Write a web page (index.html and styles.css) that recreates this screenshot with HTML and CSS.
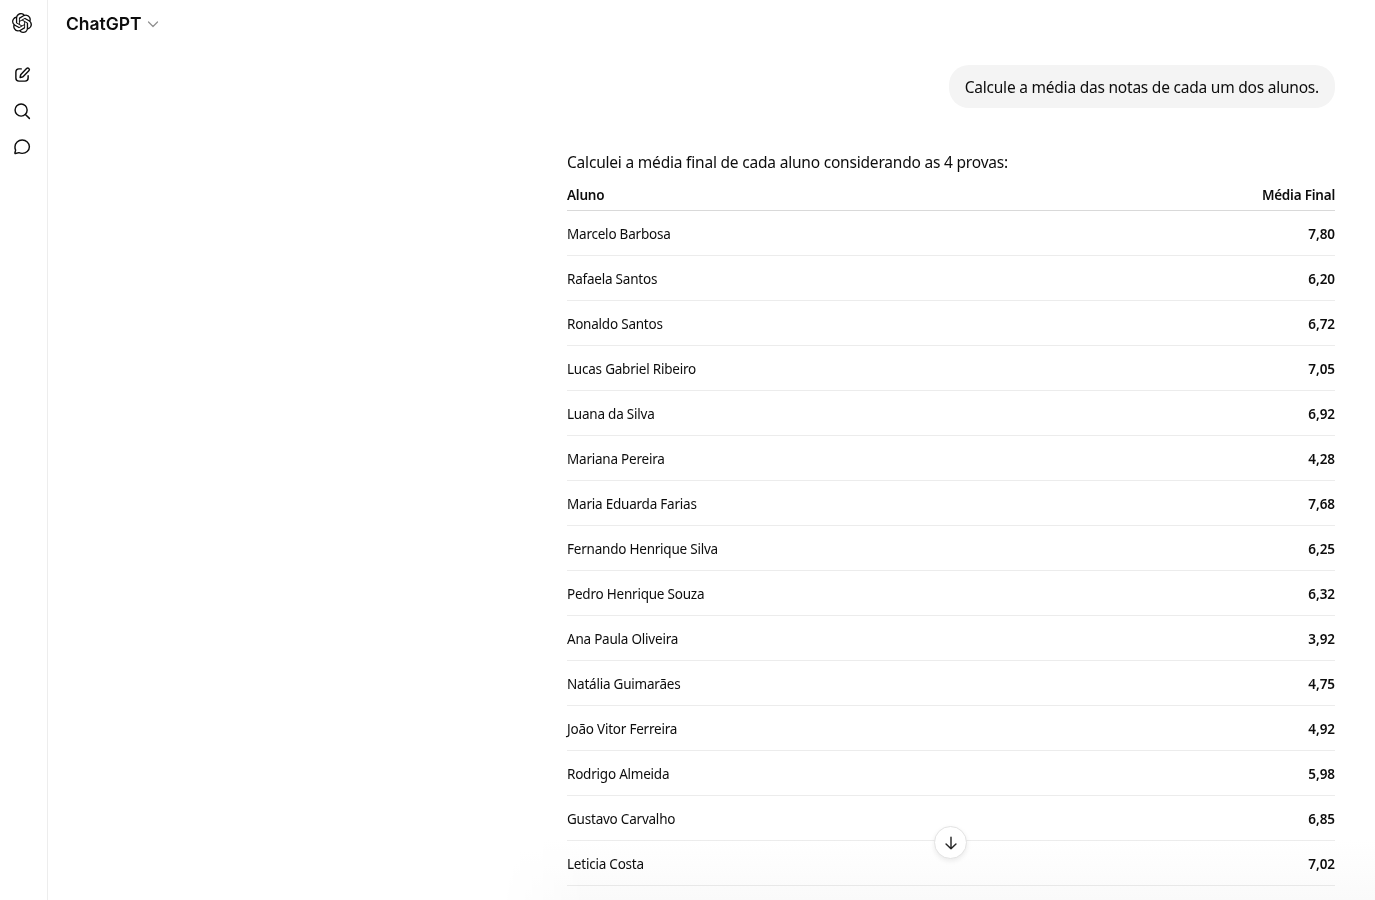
FILE: index.html
```html
<!DOCTYPE html>
<html lang="pt-BR">
<head>
<meta charset="utf-8">
<title>ChatGPT</title>
<link rel="stylesheet" href="styles.css">
</head>
<body>
<div class="app">
  <nav class="rail">
    <a class="rail-logo" aria-label="ChatGPT">
      <svg class="logo" viewBox="0 0 24 24"><path d="M22.2819 9.8211a5.9847 5.9847 0 0 0-.5157-4.9108 6.0462 6.0462 0 0 0-6.5098-2.9A6.0651 6.0651 0 0 0 4.9807 4.1818a5.9847 5.9847 0 0 0-3.9977 2.9 6.0462 6.0462 0 0 0 .7427 7.0966 5.98 5.98 0 0 0 .511 4.9107 6.051 6.051 0 0 0 6.5146 2.9001A5.9847 5.9847 0 0 0 13.2599 24a6.0557 6.0557 0 0 0 5.7718-4.2058 5.9894 5.9894 0 0 0 3.9977-2.9001 6.0557 6.0557 0 0 0-.7475-7.0729zm-9.022 12.6081a4.4755 4.4755 0 0 1-2.8764-1.0408l.1419-.0804 4.7783-2.7582a.7948.7948 0 0 0 .3927-.6813v-6.7369l2.02 1.1686a.071.071 0 0 1 .038.052v5.5826a4.504 4.504 0 0 1-4.4945 4.4944zm-9.6607-4.1254a4.4708 4.4708 0 0 1-.5346-3.0137l.142.0852 4.783 2.7582a.7712.7712 0 0 0 .7806 0l5.8428-3.3685v2.3324a.0804.0804 0 0 1-.0332.0615L9.74 19.9502a4.4992 4.4992 0 0 1-6.1408-1.6464zM2.3408 7.8956a4.485 4.485 0 0 1 2.3655-1.9728V11.6a.7664.7664 0 0 0 .3879.6765l5.8144 3.3543-2.0201 1.1685a.0757.0757 0 0 1-.071 0l-4.8303-2.7865A4.504 4.504 0 0 1 2.3408 7.872zm16.5963 3.8558L13.1038 8.364 15.1192 7.2a.0757.0757 0 0 1 .071 0l4.8303 2.7913a4.4944 4.4944 0 0 1-.6765 8.1042v-5.6772a.79.79 0 0 0-.407-.667zm2.0107-3.0231l-.142-.0852-4.7735-2.7818a.7759.7759 0 0 0-.7854 0L9.409 9.2297V6.8974a.0662.0662 0 0 1 .0284-.0615l4.8303-2.7866a4.4992 4.4992 0 0 1 6.6802 4.66zM8.3065 12.863l-2.02-1.1638a.0804.0804 0 0 1-.038-.0567V6.0742a4.4992 4.4992 0 0 1 7.3757-3.4537l-.142.0805L8.704 5.459a.7948.7948 0 0 0-.3927.6813zm1.0976-2.3654l2.602-1.4998 2.6069 1.4998v2.9994l-2.5974 1.4997-2.6067-1.4997Z"/></svg>
    </a>
    <div class="rail-tools">
      <a class="rail-btn" aria-label="Novo chat">
        <svg class="ico" viewBox="0 0 20 20"><path d="M9.2 3.200H6.600A3.400 3.400 0 0 0 3.200 6.600v6.800a3.400 3.400 0 0 0 3.400 3.400h6.800a3.400 3.400 0 0 0 3.400-3.400v-2.600"/><path d="M15.100 2.900a1.750 1.750 0 0 1 2.500 2.500l-6.200 6.200a2.400 2.400 0 0 1-1.100.6l-2.400.5.5-2.400a2.400 2.400 0 0 1 .6-1.100z"/></svg>
      </a>
      <a class="rail-btn" aria-label="Buscar">
        <svg class="ico" viewBox="0 0 20 20"><circle cx="9" cy="9" r="6.700"/><path d="M13.800 13.800l4.400 4.400"/></svg>
      </a>
      <a class="rail-btn" aria-label="Chats">
        <svg class="ico" viewBox="0 0 20 20"><path d="M10.200 2.300c4.400 0 8 3.200 8 7.400s-3.600 7.400-8 7.400c-1.300 0-2.500-.3-3.600-.8l-3.900.9c-.4.1-.7-.2-.6-.6l.8-3.200a7 7 0 0 1-.7-3.700c0-4.200 3.600-7.400 8-7.400z"/></svg>
      </a>
    </div>
  </nav>
  <div class="main">
    <header class="topbar">
      <span class="brand">ChatGPT</span>
      <svg class="caret" viewBox="0 0 12 12"><path d="M1.500 4l4.500 4.500L10.500 4"/></svg>
    </header>
    <div class="thread">
      <div class="column">
        <div class="user-row"><div class="bubble">Calcule a média das notas de cada um dos alunos.</div></div>
        <p class="intro">Calculei a média final de cada aluno considerando as 4 provas:</p>
        <table class="grades">
          <thead><tr><th>Aluno</th><th class="num">Média Final</th></tr></thead>
          <tbody>
            <tr><td>Marcelo Barbosa</td><td class="num">7,80</td></tr>
            <tr><td>Rafaela Santos</td><td class="num">6,20</td></tr>
            <tr><td>Ronaldo Santos</td><td class="num">6,72</td></tr>
            <tr><td>Lucas Gabriel Ribeiro</td><td class="num">7,05</td></tr>
            <tr><td>Luana da Silva</td><td class="num">6,92</td></tr>
            <tr><td>Mariana Pereira</td><td class="num">4,28</td></tr>
            <tr><td>Maria Eduarda Farias</td><td class="num">7,68</td></tr>
            <tr><td>Fernando Henrique Silva</td><td class="num">6,25</td></tr>
            <tr><td>Pedro Henrique Souza</td><td class="num">6,32</td></tr>
            <tr><td>Ana Paula Oliveira</td><td class="num">3,92</td></tr>
            <tr><td>Natália Guimarães</td><td class="num">4,75</td></tr>
            <tr><td>João Vitor Ferreira</td><td class="num">4,92</td></tr>
            <tr><td>Rodrigo Almeida</td><td class="num">5,98</td></tr>
            <tr><td>Gustavo Carvalho</td><td class="num">6,85</td></tr>
            <tr><td>Leticia Costa</td><td class="num">7,02</td></tr>
          </tbody>
        </table>
      </div>
    </div>
    <div class="fade"></div>
    <button class="to-bottom" aria-label="Rolar para baixo">
      <svg viewBox="0 0 20 20"><path d="M10 3.500v13M4.500 11l5.500 5.500 5.500-5.500"/></svg>
    </button>
  </div>
</div>
</body>
</html>
```
FILE: styles.css
```css
* { box-sizing: border-box; }
html, body { margin: 0; height: 100%; overflow: hidden; background: #fff; }
body { font-family: "Noto Sans", "Open Sans", sans-serif; color: #0d0d0d; }

.app { display: flex; height: 900px; }

.rail {
  width: 48px;
  flex: none;
  border-right: 1px solid #ededed;
  display: flex;
  flex-direction: column;
  padding-top: 13px;
}
.rail-logo { display: flex; padding-left: 12px; height: 20px; }
.logo { width: 20px; height: 20px; fill: #0d0d0d; }
.rail-tools { display: flex; flex-direction: column; margin-top: 24px; }
.rail-btn { height: 36px; display: flex; align-items: center; padding-left: 13px; }
.ico { width: 18px; height: 18px; fill: none; stroke: #0d0d0d; stroke-width: 1.6; stroke-linecap: round; stroke-linejoin: round; }

.main { flex: 1; position: relative; min-width: 0; }

.topbar { height: 47px; display: flex; align-items: center; gap: 6px; padding-left: 18px; }
.brand { font-family: Inter, "Liberation Sans", sans-serif; font-size: 17.500px; font-weight: 600; letter-spacing: -0.05px; color: #0d0d0d; }
.caret { width: 12px; height: 12px; fill: none; stroke: #8f8f8f; stroke-width: 1.2; stroke-linecap: round; stroke-linejoin: round; }

.thread { padding: 18px 40px 0 519px; }
.column { width: 768px; }

.user-row { display: flex; justify-content: flex-end; }
.bubble {
  background: #f4f4f4;
  border-radius: 20px;
  height: 43px;
  padding: 0 16px;
  display: flex;
  align-items: center;
  font-size: 15.500px;
  letter-spacing: -0.22px;
  line-height: 24px;
}

.intro { margin: 42px 0 0; font-size: 15.500px; line-height: 24px; letter-spacing: -0.2px; }

.grades { width: 100%; border-collapse: collapse; font-size: 13.500px; letter-spacing: -0.22px; margin-top: 5px; }
.grades th { text-align: left; font-weight: 600; height: 31px; padding: 2px 0 0; border-bottom: 1px solid #d9d9d9; }
.grades td { height: 45px; padding: 2px 0 0; border-bottom: 1px solid #ececec; }
.grades .num { text-align: right; }
.grades td.num { font-weight: 600; letter-spacing: -0.05px; }

.fade {
  position: absolute;
  left: 450px; right: 0; bottom: 0;
  height: 60px;
  background: linear-gradient(to bottom, #fff, #fafafa);
  mask-image: linear-gradient(to right, transparent, #000 90px);
  mix-blend-mode: multiply;
  pointer-events: none;
}

.to-bottom {
  position: absolute;
  left: 886px;
  top: 826px;
  width: 33px;
  height: 33px;
  padding: 0;
  border-radius: 50%;
  border: 1px solid #e3e3e3;
  background: #fff;
  box-shadow: 0 2px 5px rgba(0,0,0,.08);
  display: flex;
  align-items: center;
  justify-content: center;
}
.to-bottom svg { width: 18px; height: 18px; fill: none; stroke: #262626; stroke-width: 1.6; stroke-linecap: round; stroke-linejoin: round; }
```
